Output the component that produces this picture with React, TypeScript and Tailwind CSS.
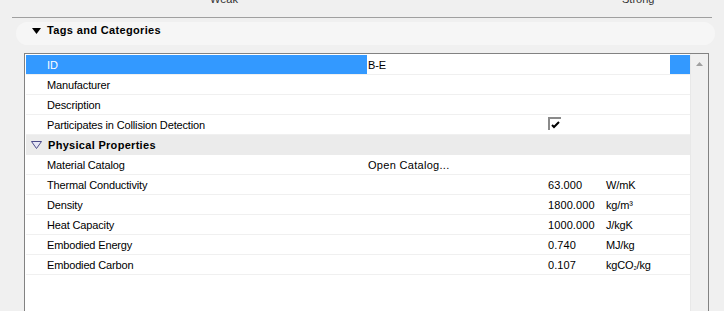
import React from "react";

const font = { fontFamily: '"Liberation Sans", Arial, sans-serif' };

type Row = { label: string; value?: string; num?: string; unit?: React.ReactNode; check?: boolean; selected?: boolean };

const tagRows: Row[] = [
  { label: "ID", value: "B-E", selected: true },
  { label: "Manufacturer" },
  { label: "Description" },
  { label: "Participates in Collision Detection", check: true },
];

const physRows: Row[] = [
  { label: "Material Catalog", value: "Open Catalog..." },
  { label: "Thermal Conductivity", num: "63.000", unit: "W/mK" },
  { label: "Density", num: "1800.000", unit: <>kg/m³</> },
  { label: "Heat Capacity", num: "1000.000", unit: "J/kgK" },
  { label: "Embodied Energy", num: "0.740", unit: "MJ/kg" },
  { label: "Embodied Carbon", num: "0.107", unit: <>kgCO<span className="text-[8px]">₂</span>/kg</> },
];

function Check() {
  return (
    <div className="w-[13px] h-[13px] border-t-2 border-l-2 border-[#8a8a8a] bg-white flex items-center justify-center">
      <svg width="9" height="8" viewBox="0 0 9 8">
        <path d="M1 4 L3 6 L8 1" stroke="#000" strokeWidth="2" fill="none" />
      </svg>
    </div>
  );
}

function DataRow({ r }: { r: Row }) {
  return (
    <div className="flex h-[20px] border-b border-[#f0f0f0] text-[11px] leading-[13px] text-black bg-white tracking-[-0.15px]">
      <div className={`w-[341px] h-full flex items-center pt-[2px] pl-[21px] ${r.selected ? "bg-[#3399ff] text-white" : ""}`}>
        {r.label}
      </div>
      <div className="flex-1 h-full flex items-center pt-[2px] pl-[1px] relative">
        {r.value && (
          <span className={r.value.startsWith("Open") ? "tracking-[0.3px]" : ""}>{r.value}</span>
        )}
        {r.check && (
          <div className="absolute left-[181px] top-[2px]">
            <Check />
          </div>
        )}
        {r.num && <span className="absolute left-[181px] top-[4px] tracking-[0.1px]">{r.num}</span>}
        {r.unit && <span className="absolute left-[239px] top-[4px]">{r.unit}</span>}
        {r.selected && <div className="absolute right-0 top-0 w-[20px] h-full bg-[#3399ff]" />}
      </div>
    </div>
  );
}

export default function App() {
  return (
    <div className="w-[724px] h-[311px] bg-[#f0f0f0] overflow-hidden relative" style={font}>
      {/* top labels */}
      <div className="h-[18px] mx-[12px] border-b border-[#a0a0a0] relative text-[11px] text-[#333]">
        <span className="absolute left-[198px] top-[-9px]">Weak</span>
        <span className="absolute left-[610px] top-[-9px]">Strong</span>
      </div>
      {/* section header */}
      <div className="mt-[4px] ml-[16px] mr-[9px] h-[23px] rounded-full bg-[#f6f6f6] flex items-start pt-[2px] pl-[16px] gap-[6px]">
        <svg width="9" height="6" viewBox="0 0 9 6" className="mt-[4px]">
          <path d="M0 0 L9 0 L4.5 6 Z" fill="#000" />
        </svg>
        <span className="text-[11px] leading-[13px] font-bold text-black tracking-[0.35px]">Tags and Categories</span>
      </div>
      {/* list box */}
      <div className="mt-[8px] ml-[24px] w-[685px] h-[300px] border border-[#828282] bg-white flex">
        <div className="flex-1 pt-[1px] pl-[1px]">
          {tagRows.map((r) => (
            <DataRow key={r.label} r={r} />
          ))}
          <div className="flex h-[20px] items-center bg-[#ebebeb] pl-[5px] gap-[6px]">
            <svg width="11" height="8" viewBox="0 0 11 8">
              <path d="M0.5 0.5 L10.5 0.5 L5.5 7.5 Z" fill="#e6e6f5" stroke="#4b4b8a" strokeWidth="1" />
            </svg>
            <span className="text-[11px] leading-[13px] pt-[1px] font-bold text-black tracking-[0.3px]">Physical Properties</span>
          </div>
          {physRows.map((r) => (
            <DataRow key={r.label} r={r} />
          ))}
        </div>
        <div className="w-[18px] bg-[#f0f0f0] border-l border-[#e8e8e8] flex justify-center pt-[8px]">
          <svg width="7" height="4" viewBox="0 0 7 4">
            <path d="M0 4 L3.5 0 L7 4 Z" fill="#a0a0a0" />
          </svg>
        </div>
      </div>
    </div>
  );
}
